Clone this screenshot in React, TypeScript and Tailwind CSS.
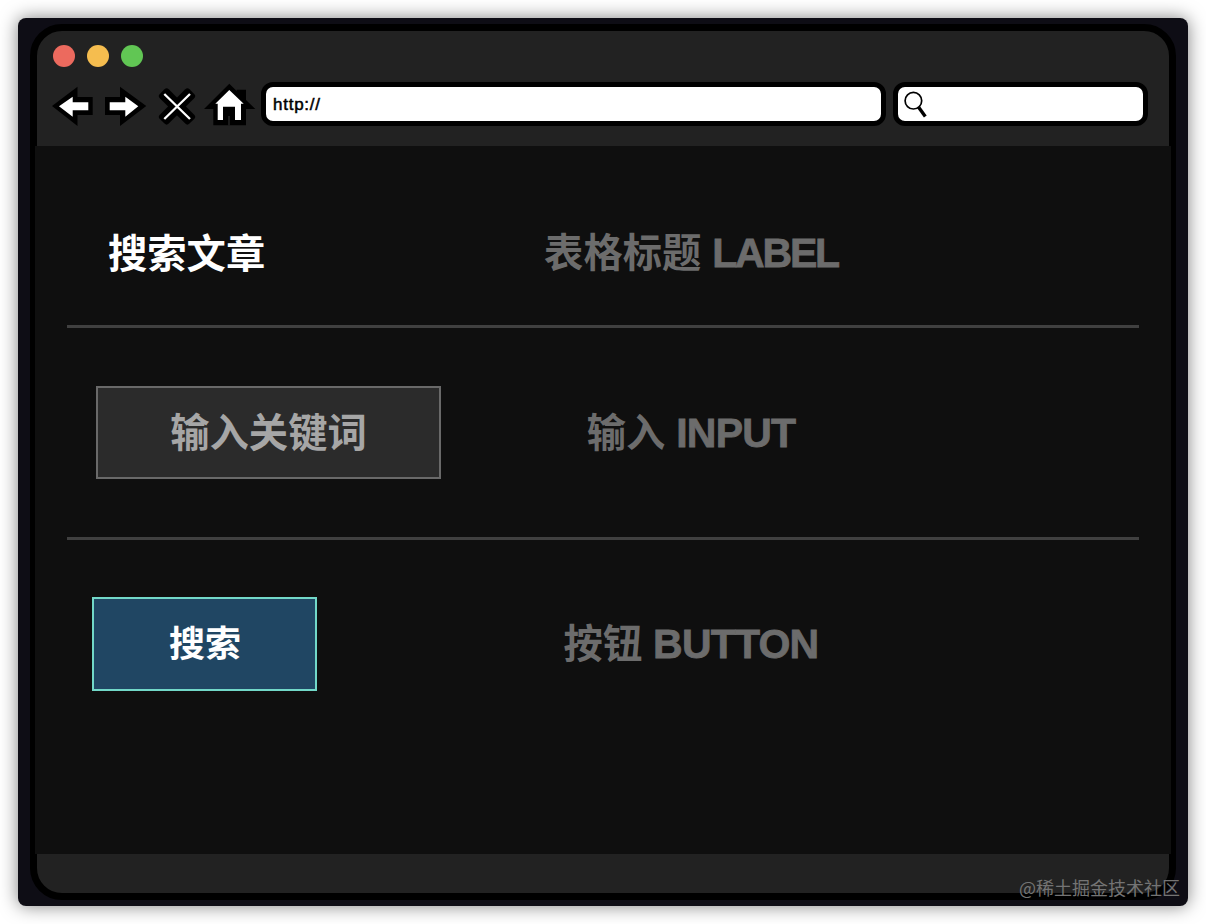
// src/App.tsx
import React from 'react';

const lights = ['bg-[#ec6a5e]', 'bg-[#f5bd4f]', 'bg-[#61c654]'];

const NavIcons: React.FC = () => (
  <div className="flex h-11 w-[209px] items-center">
    <svg className="h-11 w-[52px]" viewBox="52 82 52 44">
      <path d="M52 106 77.5 86.7V97H92.7V115H77.5V126Z" fill="#000" />
      <path d="M59 106.3 72.7 96.7V102.3H88.3V110.3H72.7V116.7Z" fill="#fff" />
    </svg>
    <svg className="h-11 w-[52px]" viewBox="104 82 52 44">
      <path d="M146.3 106 120 86.7V97H105V115H120V126Z" fill="#000" />
      <path d="M138.3 106.3 125.3 96.7V102.3H109.7V110.3H125.3V116.7Z" fill="#fff" />
    </svg>
    <svg className="h-11 w-12" viewBox="156 82 48 44">
      <g transform="translate(177 106.4) rotate(45)">
        <rect x="-21" y="-6.3" width="42" height="12.6" rx="3" fill="#000" />
        <rect x="-6.3" y="-21" width="12.6" height="42" rx="3" fill="#000" />
      </g>
      <path d="M164.3 94 190 119M190 94 164.3 119" stroke="#fff" strokeWidth="2.3" />
    </svg>
    <svg className="h-11 w-[52px]" viewBox="204 82 52 44">
      <path d="M204 109 229.3 83.7 236.7 91V89.7H246V100L255.3 109H246V125.3H213.3V109Z" fill="#000" />
      <path d="M229.3 90 243.7 103.7H241V120H235V106.7H223V120H217.7V103.7H215.3Z" fill="#fff" />
      <path d="M229 116V125.5" stroke="#222" strokeWidth="1.6" />
    </svg>
  </div>
);

const Toolbar: React.FC = () => (
  <header className="h-[115px] pl-4 pt-3.5">
    <div className="flex gap-[12px]">
      {lights.map((color) => (
        <span key={color} className={`size-[22px] rounded-full ${color}`} />
      ))}
    </div>
    <div className="mt-[15px] flex -ml-px">
      <NavIcons />
      <div className="flex h-11 w-[625px] items-center rounded-xl border-5 border-black bg-white pt-px pl-[7px] text-[17px] font-normal tracking-[0.75px] text-black [-webkit-text-stroke:0.5px_black]">
        http://
      </div>
      <div className="ml-[7px] h-11 w-[255px] rounded-xl border-5 border-black bg-white">
        <svg className="h-[34px] w-8" viewBox="898 87 32 34" fill="none" stroke="#000">
          <circle cx="913.4" cy="100.7" r="8.3" strokeWidth="1.7" />
          <path d="M918.8 107.4 925.3 116.4" strokeWidth="3.4" />
        </svg>
      </div>
    </div>
  </header>
);

const Label: React.FC<{ zh: string; en: string; tracking?: string }> = ({ zh, en, tracking = 'tracking-[-0.8px]' }) => (
  <div className="w-[360px] text-center text-[#6c6c6c] whitespace-nowrap">
    {zh}{' '}
    <span className={`text-[41px] [-webkit-text-stroke:0.8px_#6c6c6c] ${tracking}`}>{en}</span>
  </div>
);

const App: React.FC = () => {
  return (
    <div className="relative h-[924px] w-[1206px] overflow-hidden bg-white p-[18px] font-['Liberation_Sans','Noto_Sans_CJK_SC',sans-serif]">
      <div className="h-[888px] rounded-lg bg-[#0e0d15] px-3 py-1.5 shadow-[0_0_18px_rgba(0,0,0,0.5)]">
        <div className="h-[876px] rounded-[32px] border-7 border-black bg-[#222222]">
          <Toolbar />

          <main className="-mx-0.5 h-[708px] bg-[#0f0f0f] px-8 text-[39.3px] leading-[60px] font-bold">
            {/* Label row */}
            <section className="flex h-[179px] items-center pt-[35px]">
              <div className="w-[444px] pt-0.5 pl-[41px] text-white">搜索文章</div>
              <Label zh="表格标题" en="LABEL" tracking="tracking-[-2.2px]" />
            </section>
            <hr className="h-[3px] border-0 bg-[#404040]" />

            {/* Input row */}
            <section className="flex h-[209px] items-center">
              <div className="w-[444px] pl-[29px]">
                <div className="flex h-[93px] w-[345px] items-center justify-center border-2 border-[#696969] bg-[#2b2b2b] text-[#a6a6a6]">
                  输入关键词
                </div>
              </div>
              <Label zh="输入" en="INPUT" />
            </section>
            <hr className="h-[3px] border-0 bg-[#404040]" />

            {/* Button row */}
            <section className="flex h-[208px] items-center">
              <div className="w-[444px] pl-[25px]">
                <button className="flex h-[94px] w-[225px] items-center justify-center border-2 border-[#72d8c8] bg-[#204663] pt-0.5 pl-px text-4xl font-bold text-white">
                  搜索
                </button>
              </div>
              <Label zh="按钮" en="BUTTON" />
            </section>
          </main>
        </div>
      </div>

      <span className="absolute right-[26px] bottom-[25px] font-['Noto_Sans_CJK_SC',sans-serif] text-[18px] leading-6 text-[#747474]">
        @稀土掘金技术社区
      </span>
    </div>
  );
};

export default App;
